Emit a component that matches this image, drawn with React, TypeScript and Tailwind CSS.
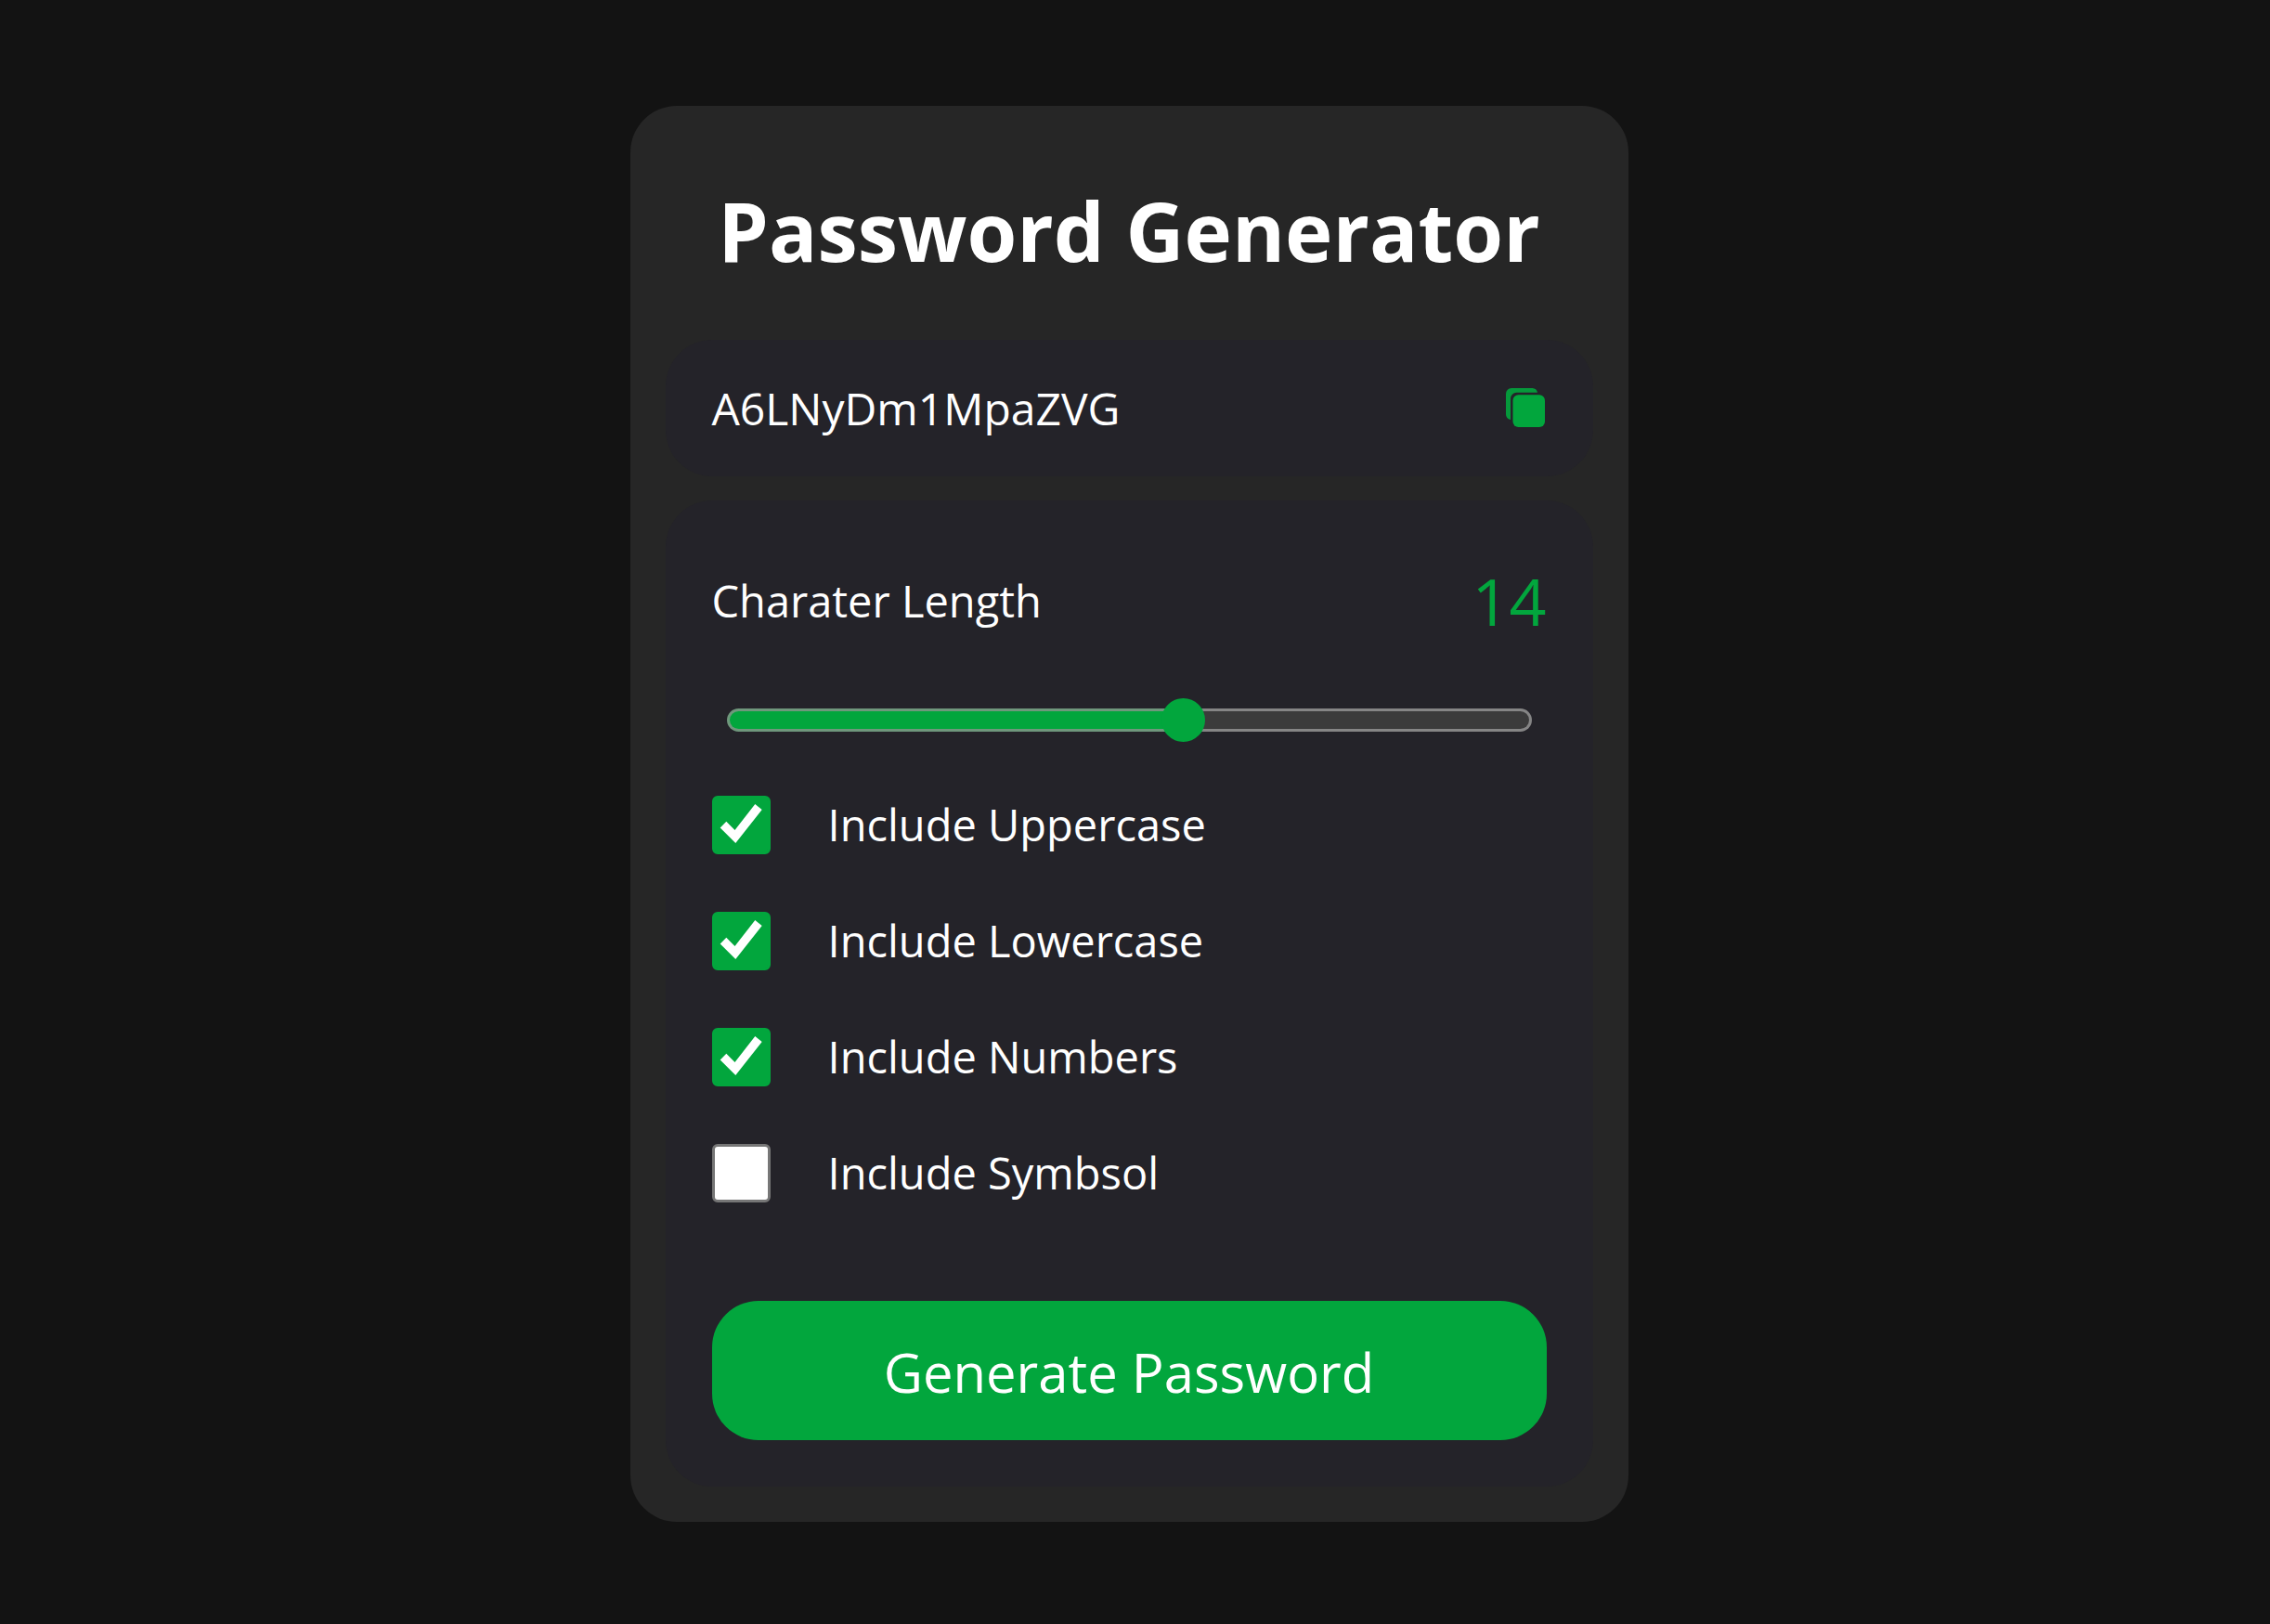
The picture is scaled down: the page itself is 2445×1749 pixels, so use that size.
import { useId, useState, type CSSProperties } from "react";

const OPTIONS = [
  { label: "Include Uppercase", checked: true },
  { label: "Include Lowercase", checked: true },
  { label: "Include Numbers", checked: true },
  { label: "Include Symbsol", checked: false },
];

const MIN = 6;
const MAX = 20;

function CopyIcon() {
  return (
    <svg viewBox="0 0 42 42" className="h-[42px] w-[42px]" fill="currentColor" aria-hidden="true">
      <rect x="7.5" y="7.300" width="34.500" height="34.700" rx="6" />
      <path
        opacity="0.9"
        d="M34 4.800H11.500A6.500 6.500 0 0 0 5 11.300V34A6 6 0 0 1 0 28V6A6 6 0 0 1 6 0H28.500A6 6 0 0 1 34 4.800Z"
      />
    </svg>
  );
}

function Option({ label, initial }: { label: string; initial: boolean }) {
  const id = useId();
  const [checked, setChecked] = useState(initial);
  return (
    <div className="flex items-center gap-[62px]">
      <span className="grid shrink-0">
        <input
          id={id}
          type="checkbox"
          checked={checked}
          onChange={(e) => setChecked(e.target.checked)}
          className="col-start-1 row-start-1 h-[63px] w-[63px] appearance-none rounded-[6px] border-3 border-[#767676] bg-white checked:border-[#02a63d] checked:bg-[#02a63d]"
        />
        {checked && (
          <svg
            viewBox="0 0 63 63"
            className="pointer-events-none col-start-1 row-start-1 h-[63px] w-[63px]"
            fill="#fff"
            aria-hidden="true"
          >
            <path d="M8.700 34.500L15.300 27.700L24.500 37L46.300 9L53.700 15L25.300 51Z" />
          </svg>
        )}
      </span>
      <label htmlFor={id} className="text-[47px] leading-[62px]">
        {label}
      </label>
    </div>
  );
}

export default function App() {
  const [length, setLength] = useState(14);
  const fill = `${((length - MIN) / (MAX - MIN)) * 100}%`;

  return (
    <main className="flex min-h-screen items-center justify-center bg-[#131313] pt-[3px] pr-[13px] font-['Open_Sans','Noto_Sans',sans-serif] text-white">
      <section className="w-full max-w-[1075px] rounded-[50px] bg-[#262626] p-[38px]">
        <h1 className="pt-[38px] pb-[60px] text-center text-[87px] leading-[116px] font-bold">
          Password Generator
        </h1>

        <div className="flex items-center justify-between rounded-[50px] bg-[#242329] px-[50px] py-[42px]">
          <output className="text-[48px] leading-[63px]">A6LNyDm1MpaZVG</output>
          <button type="button" aria-label="Copy password" className="mr-0.5 text-[#02a63d]">
            <CopyIcon />
          </button>
        </div>

        <div className="mt-[26px] rounded-[50px] bg-[#242329] p-[50px]">
          <div className="flex items-center justify-between pt-2">
            <label htmlFor="length" className="text-[47px] leading-[100px]">
              Charater Length
            </label>
            <output htmlFor="length" className="text-[70px] leading-[100px] text-[#02a63d]">
              {length}
            </output>
          </div>

          <div className="mt-11 flex h-[70px] items-center px-4">
            <input
              id="length"
              type="range"
              min={MIN}
              max={MAX}
              value={length}
              onChange={(e) => setLength(Number(e.target.value))}
              style={{ "--fill": fill } as CSSProperties}
              className="h-[47px] w-full appearance-none bg-transparent [&::-webkit-slider-runnable-track]:h-[25px] [&::-webkit-slider-runnable-track]:rounded-full [&::-webkit-slider-runnable-track]:border-3 [&::-webkit-slider-runnable-track]:border-transparent [&::-webkit-slider-runnable-track]:[background:linear-gradient(to_right,#02a63d_var(--fill),#3b3b3b_var(--fill))_padding-box,linear-gradient(to_right,#6f977c_var(--fill),#858585_var(--fill))_border-box] [&::-webkit-slider-thumb]:mt-[-14px] [&::-webkit-slider-thumb]:h-[47px] [&::-webkit-slider-thumb]:w-[47px] [&::-webkit-slider-thumb]:appearance-none [&::-webkit-slider-thumb]:rounded-full [&::-webkit-slider-thumb]:bg-[#02a63d]"
            />
          </div>

          <div className="mt-[46px] flex flex-col gap-[62px]">
            {OPTIONS.map((o) => (
              <Option key={o.label} label={o.label} initial={o.checked} />
            ))}
          </div>

          <button
            type="button"
            className="mt-[106px] h-[150px] w-full rounded-[50px] bg-[#02a63d] pt-1 text-[58px]"
          >
            Generate Password
          </button>
        </div>
      </section>
    </main>
  );
}
